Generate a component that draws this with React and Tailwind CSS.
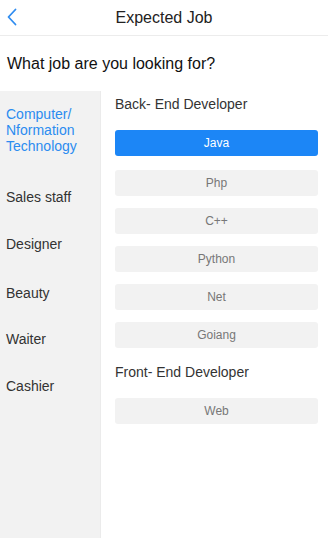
const categories = [
  { label: "Computer/\nNformation\nTechnology", active: true, mt: "mt-0" },
  { label: "Sales staff", mt: "mt-[35px]" },
  { label: "Designer", mt: "mt-[31px]" },
  { label: "Beauty", mt: "mt-[33px]" },
  { label: "Waiter", mt: "mt-[30px]" },
  { label: "Cashier", mt: "mt-[31px]" },
];

const groups = [
  { title: "Back- End Developer", jobs: ["Java", "Php", "C++", "Python", "Net", "Goiang"] },
  { title: "Front- End Developer", jobs: ["Web"] },
];

export default function App() {
  return (
    <div className="w-[328px] h-[538px] bg-white flex flex-col overflow-hidden" style={{ fontFamily: '"Liberation Sans", Arial, sans-serif' }}>
      <div className="relative h-[36px] flex items-center justify-center border-b border-[#ececec]">
        <svg className="absolute left-[6px] top-[8px]" width="12" height="18" viewBox="0 0 12 18" fill="none">
          <path d="M9.5 1.5 L2.5 9 L9.5 16.5" stroke="#2f8cf0" strokeWidth="1.8" strokeLinecap="round" strokeLinejoin="round" />
        </svg>
        <span className="text-[16px] text-[#222]">Expected Job</span>
      </div>

      <div className="h-[55px] flex items-center pl-[7px]">
        <span className="text-[16px] text-[#111]">What job are you looking for?</span>
      </div>

      <div className="flex flex-1">
        <div className="w-[101px] bg-[#f2f2f2] border-r border-[#ebebeb] pt-[15px] pl-[6px]">
          {categories.map((c, i) => (
            <div
              key={i}
              className={`${c.mt} text-[14px] leading-[16px] whitespace-pre-line ${c.active ? "text-[#2b8cf0]" : "text-[#333]"}`}
            >
              {c.label}
            </div>
          ))}
        </div>

        <div className="flex-1 pl-[14px] pr-[10px] pt-[3px]">
          {groups.map((g, gi) => (
            <div key={gi} className={gi > 0 ? "mt-[14px]" : ""}>
              <div className="text-[14px] leading-[20px] text-[#333]">{g.title}</div>
              <div className="mt-[16px] flex flex-col gap-[12px]">
                {g.jobs.map((j, ji) => {
                  const active = gi === 0 && ji === 0;
                  return (
                    <div
                      key={j}
                      className={`h-[26px] rounded-[3px] flex items-center justify-center text-[12px] ${gi === 0 && ji === 1 ? "mt-[2px]" : ""} ${active ? "bg-[#1c86f6] text-white" : "bg-[#f2f2f2] text-[#777]"}`}
                    >
                      {j}
                    </div>
                  );
                })}
              </div>
            </div>
          ))}
        </div>
      </div>
    </div>
  );
}
